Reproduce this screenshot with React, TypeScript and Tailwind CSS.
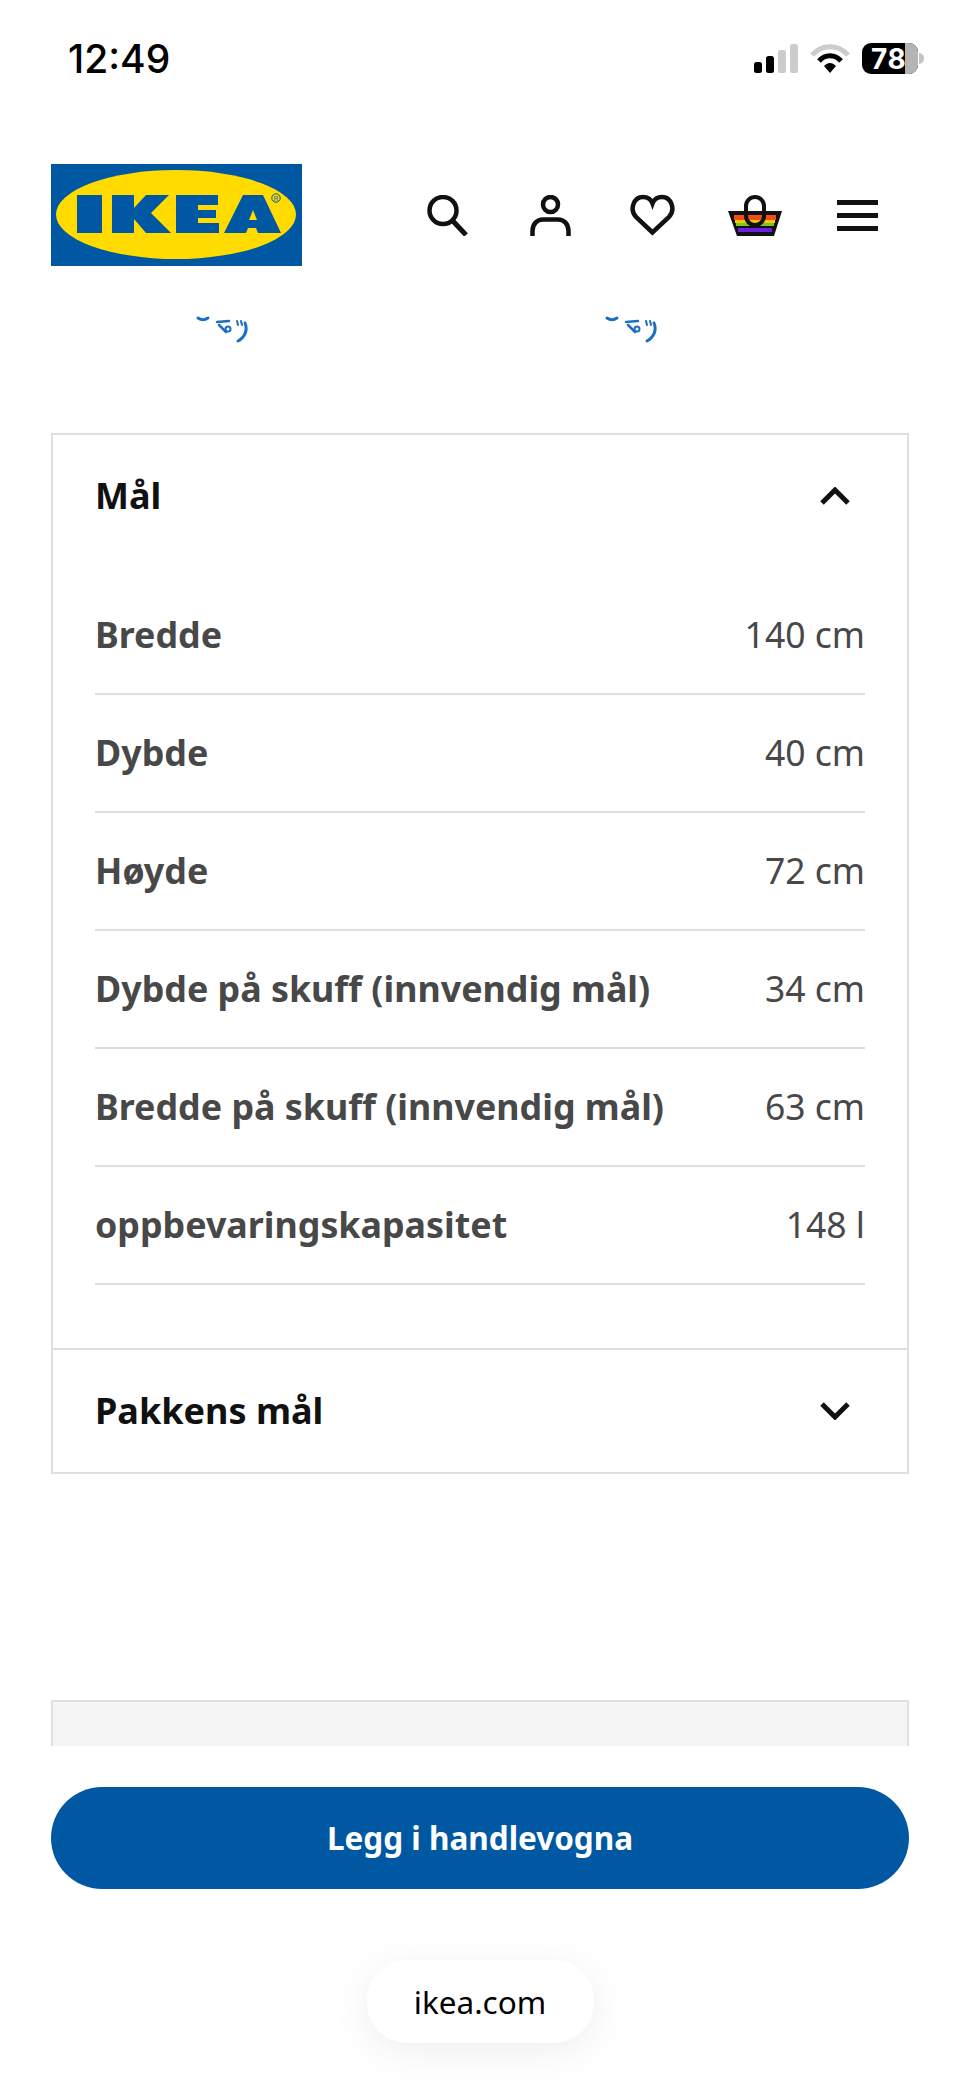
const rows = [
  { label: 'Bredde', value: '140 cm' },
  { label: 'Dybde', value: '40 cm' },
  { label: 'Høyde', value: '72 cm' },
  { label: 'Dybde på skuff (innvendig mål)', value: '34 cm' },
  { label: 'Bredde på skuff (innvendig mål)', value: '63 cm' },
  { label: 'oppbevaringskapasitet', value: '148 l' },
];

function StatusBar() {
  return (
    <div className="flex h-[118px] items-start justify-between pl-[68px] pr-[36px] pt-[36px]">
      <span className="font-['Inter',sans-serif] text-[39px] leading-[46px] font-medium text-black">12:49</span>
      <div className="mt-[7px] flex items-center gap-[12px]">
        <svg width="44" height="29" viewBox="0 0 44 29">
          <rect x="0" y="18" width="8" height="11" rx="2.5" fill="#000" />
          <rect x="12" y="12" width="8" height="17" rx="2.5" fill="#000" />
          <rect x="24" y="6" width="8" height="23" rx="2.5" fill="#ccc" />
          <rect x="36" y="0" width="8" height="29" rx="2.5" fill="#ccc" />
        </svg>
        <svg width="40" height="29" viewBox="0 0 40 29">
          <path d="M2 11 C12 0 28 0 38 11" fill="none" stroke="#ccc" strokeWidth="5" />
          <path d="M9 17 C15 10 25 10 31 17" fill="none" stroke="#000" strokeWidth="5" />
          <path d="M14 22 C18 18 22 18 26 22 L20 29 Z" fill="#000" />
        </svg>
        <div className="flex items-center">
          <div className="relative flex h-[31px] w-[56px] items-center overflow-hidden rounded-[9px] bg-black pl-[9px]">
            <div className="absolute inset-y-0 right-0 w-[13px] bg-[#b4b4b4]" />
            <span className="relative font-['Inter',sans-serif] text-[28px] leading-none font-bold tracking-[0.5px] text-white">78</span>
          </div>
          <div className="ml-[1px] h-[11px] w-[5px] rounded-r-full bg-[#c4c4c4]" />
        </div>
      </div>
    </div>
  );
}

function Logo() {
  return (
    <svg width="251" height="102" viewBox="0 0 251 102" className="block">
      <rect width="251" height="102" fill="#0058a3" />
      <ellipse cx="125" cy="50.5" rx="120" ry="44.5" fill="#ffdb00" />
      <path
        fill="#0058a3"
        fillRule="evenodd"
        d="M26 31H51V69H26Z M61 31H83V44L95 31H118L100 49L120 69H95L83 55V69H61Z M125 31H167V41H147V46H165V54H147V59H168V69H125Z M173 69L192 31H212L230 69H207L205 64H197L195 69Z M198 56H206L202 46Z"
      />
      <circle cx="225" cy="34" r="4.2" fill="none" stroke="#0058a3" strokeWidth="1" />
      <text x="225" y="36.5" textAnchor="middle" fontSize="6.5" fontFamily="Liberation Sans, sans-serif" fill="#0058a3">R</text>
    </svg>
  );
}

function NavIcons() {
  return (
    <div className="flex items-center pr-[51px]">
      <div className="flex w-[102.5px] justify-center">
        <svg width="41" height="41" viewBox="0 0 41 41" fill="none" stroke="#111" strokeWidth="4.5">
          <circle cx="16" cy="15.5" r="13.5" />
          <path d="M25 25 L39 40" strokeWidth="5" />
        </svg>
      </div>
      <div className="flex w-[102.5px] justify-center">
        <svg width="41" height="41" viewBox="0 0 41 41" fill="none" stroke="#111" strokeWidth="4.5">
          <circle cx="20.5" cy="9.5" r="7.5" />
          <path d="M2.5 41 V36 C2.5 29 7 24.5 13 24.5 H28 C34 24.5 38.5 29 38.5 36 V41" />
        </svg>
      </div>
      <div className="flex w-[102.5px] justify-center">
        <svg width="45" height="42" viewBox="0 0 45 42" fill="none" stroke="#111" strokeWidth="4.5">
          <path d="M22.5 38.5 L6 23 C-1 15 4 3 13 3 C17.5 3 21 5.5 22.5 9.5 C24 5.5 27.5 3 32 3 C41 3 46 15 39 23 Z" />
        </svg>
      </div>
      <div className="flex w-[102.5px] justify-center">
        <svg width="54" height="41" viewBox="0 0 54 41">
          <path d="M0 16 H54 L46 41 H9 Z" fill="#111" />
          <rect x="6" y="20" width="42" height="5" fill="#f04e12" />
          <rect x="7" y="25" width="40" height="3" fill="#f7c600" />
          <rect x="8" y="28" width="38" height="3" fill="#7fc41f" />
          <rect x="10" y="33" width="34" height="4" fill="#6a1fe0" />
          <rect x="18" y="2" width="18" height="28" rx="9" fill="none" stroke="#111" strokeWidth="4" />
        </svg>
      </div>
      <div className="flex w-[102.5px] justify-center">
        <div className="flex w-[41px] flex-col gap-[8px]">
          <div className="h-[5px] bg-[#111]" />
          <div className="h-[5px] bg-[#111]" />
          <div className="h-[5px] bg-[#111]" />
        </div>
      </div>
    </div>
  );
}

function Chevron({ up }: { up?: boolean }) {
  return (
    <svg width="30" height="18" viewBox="0 0 30 18" fill="none" stroke="#111" strokeWidth="5">
      <path d={up ? 'M2 16 L15 3 L28 16' : 'M2 2 L15 15 L28 2'} />
    </svg>
  );
}

// bottom edge of the product drawing that sticks out under the header
function Splash() {
  return (
    <svg width="56" height="30" viewBox="0 0 56 30" fill="none" stroke="#1a6fc4" strokeWidth="2.5" strokeLinecap="round">
      <path d="M3 2 C6 4 10 4 13 2" strokeWidth="3" />
      <path d="M22 6 L34 5 M24 9 L31 16" strokeWidth="2.5" />
      <circle cx="33" cy="13" r="2.5" strokeWidth="2" />
      <path d="M42 5 L43 9 M46 5 L47 9" strokeWidth="2" />
      <path d="M50 7 C53 14 50 21 43 25" strokeWidth="3" />
    </svg>
  );
}

export default function App() {
  return (
    <div className="flex h-[2079px] w-[960px] flex-col overflow-hidden bg-white font-['Noto_Sans',sans-serif]">
      <StatusBar />
      <div className="flex h-[180px] shrink-0 items-start justify-between pl-[51px] pt-[46px]">
        <Logo />
        <div className="pt-[30px]">
          <NavIcons />
        </div>
      </div>

      <div className="h-[1448px] shrink-0 overflow-hidden px-[51px]">
        <div className="flex h-[135px] items-start gap-[353px] pl-[144px] pt-[18px]">
          <Splash />
          <Splash />
        </div>

        <div className="border-2 border-[#dfdfdf]">
          <div className="flex h-[122px] items-center justify-between pl-[42px] pr-[57px]">
            <span className="text-[36px] font-bold text-[#111]">Mål</span>
            <Chevron up />
          </div>
          <div className="px-[42px] pb-[63px] pt-[20px]">
            {rows.map((row) => (
              <div
                key={row.label}
                className="flex h-[118px] items-center justify-between border-b-2 border-[#dfdfdf] text-[35.8px] text-[#484848]"
              >
                <span className="font-bold">{row.label}</span>
                <span className="text-[35.5px]">{row.value}</span>
              </div>
            ))}
          </div>
          <div className="flex h-[124px] items-center justify-between border-t-2 border-[#dfdfdf] pl-[42px] pr-[57px]">
            <span className="text-[36px] font-bold text-[#111]">Pakkens mål</span>
            <Chevron />
          </div>
        </div>

        <div className="mt-[226px] h-[100px] border-x-2 border-t-2 border-[#dfdfdf] bg-[#f5f5f5]" />
      </div>

      <div className="shrink-0 px-[51px] pt-[41px]">
        <button className="flex h-[102px] w-full items-center justify-center rounded-full bg-[#0058a3] text-[31.5px] font-bold text-white">
          Legg i handlevogna
        </button>
      </div>

      <div className="flex justify-center pt-[71px]">
        <div className="flex h-[83px] w-[227px] items-center justify-center rounded-[40px] bg-white text-[31.5px] text-black shadow-[0_8px_40px_rgba(0,0,0,0.07)]">
          ikea.com
        </div>
      </div>
    </div>
  );
}
